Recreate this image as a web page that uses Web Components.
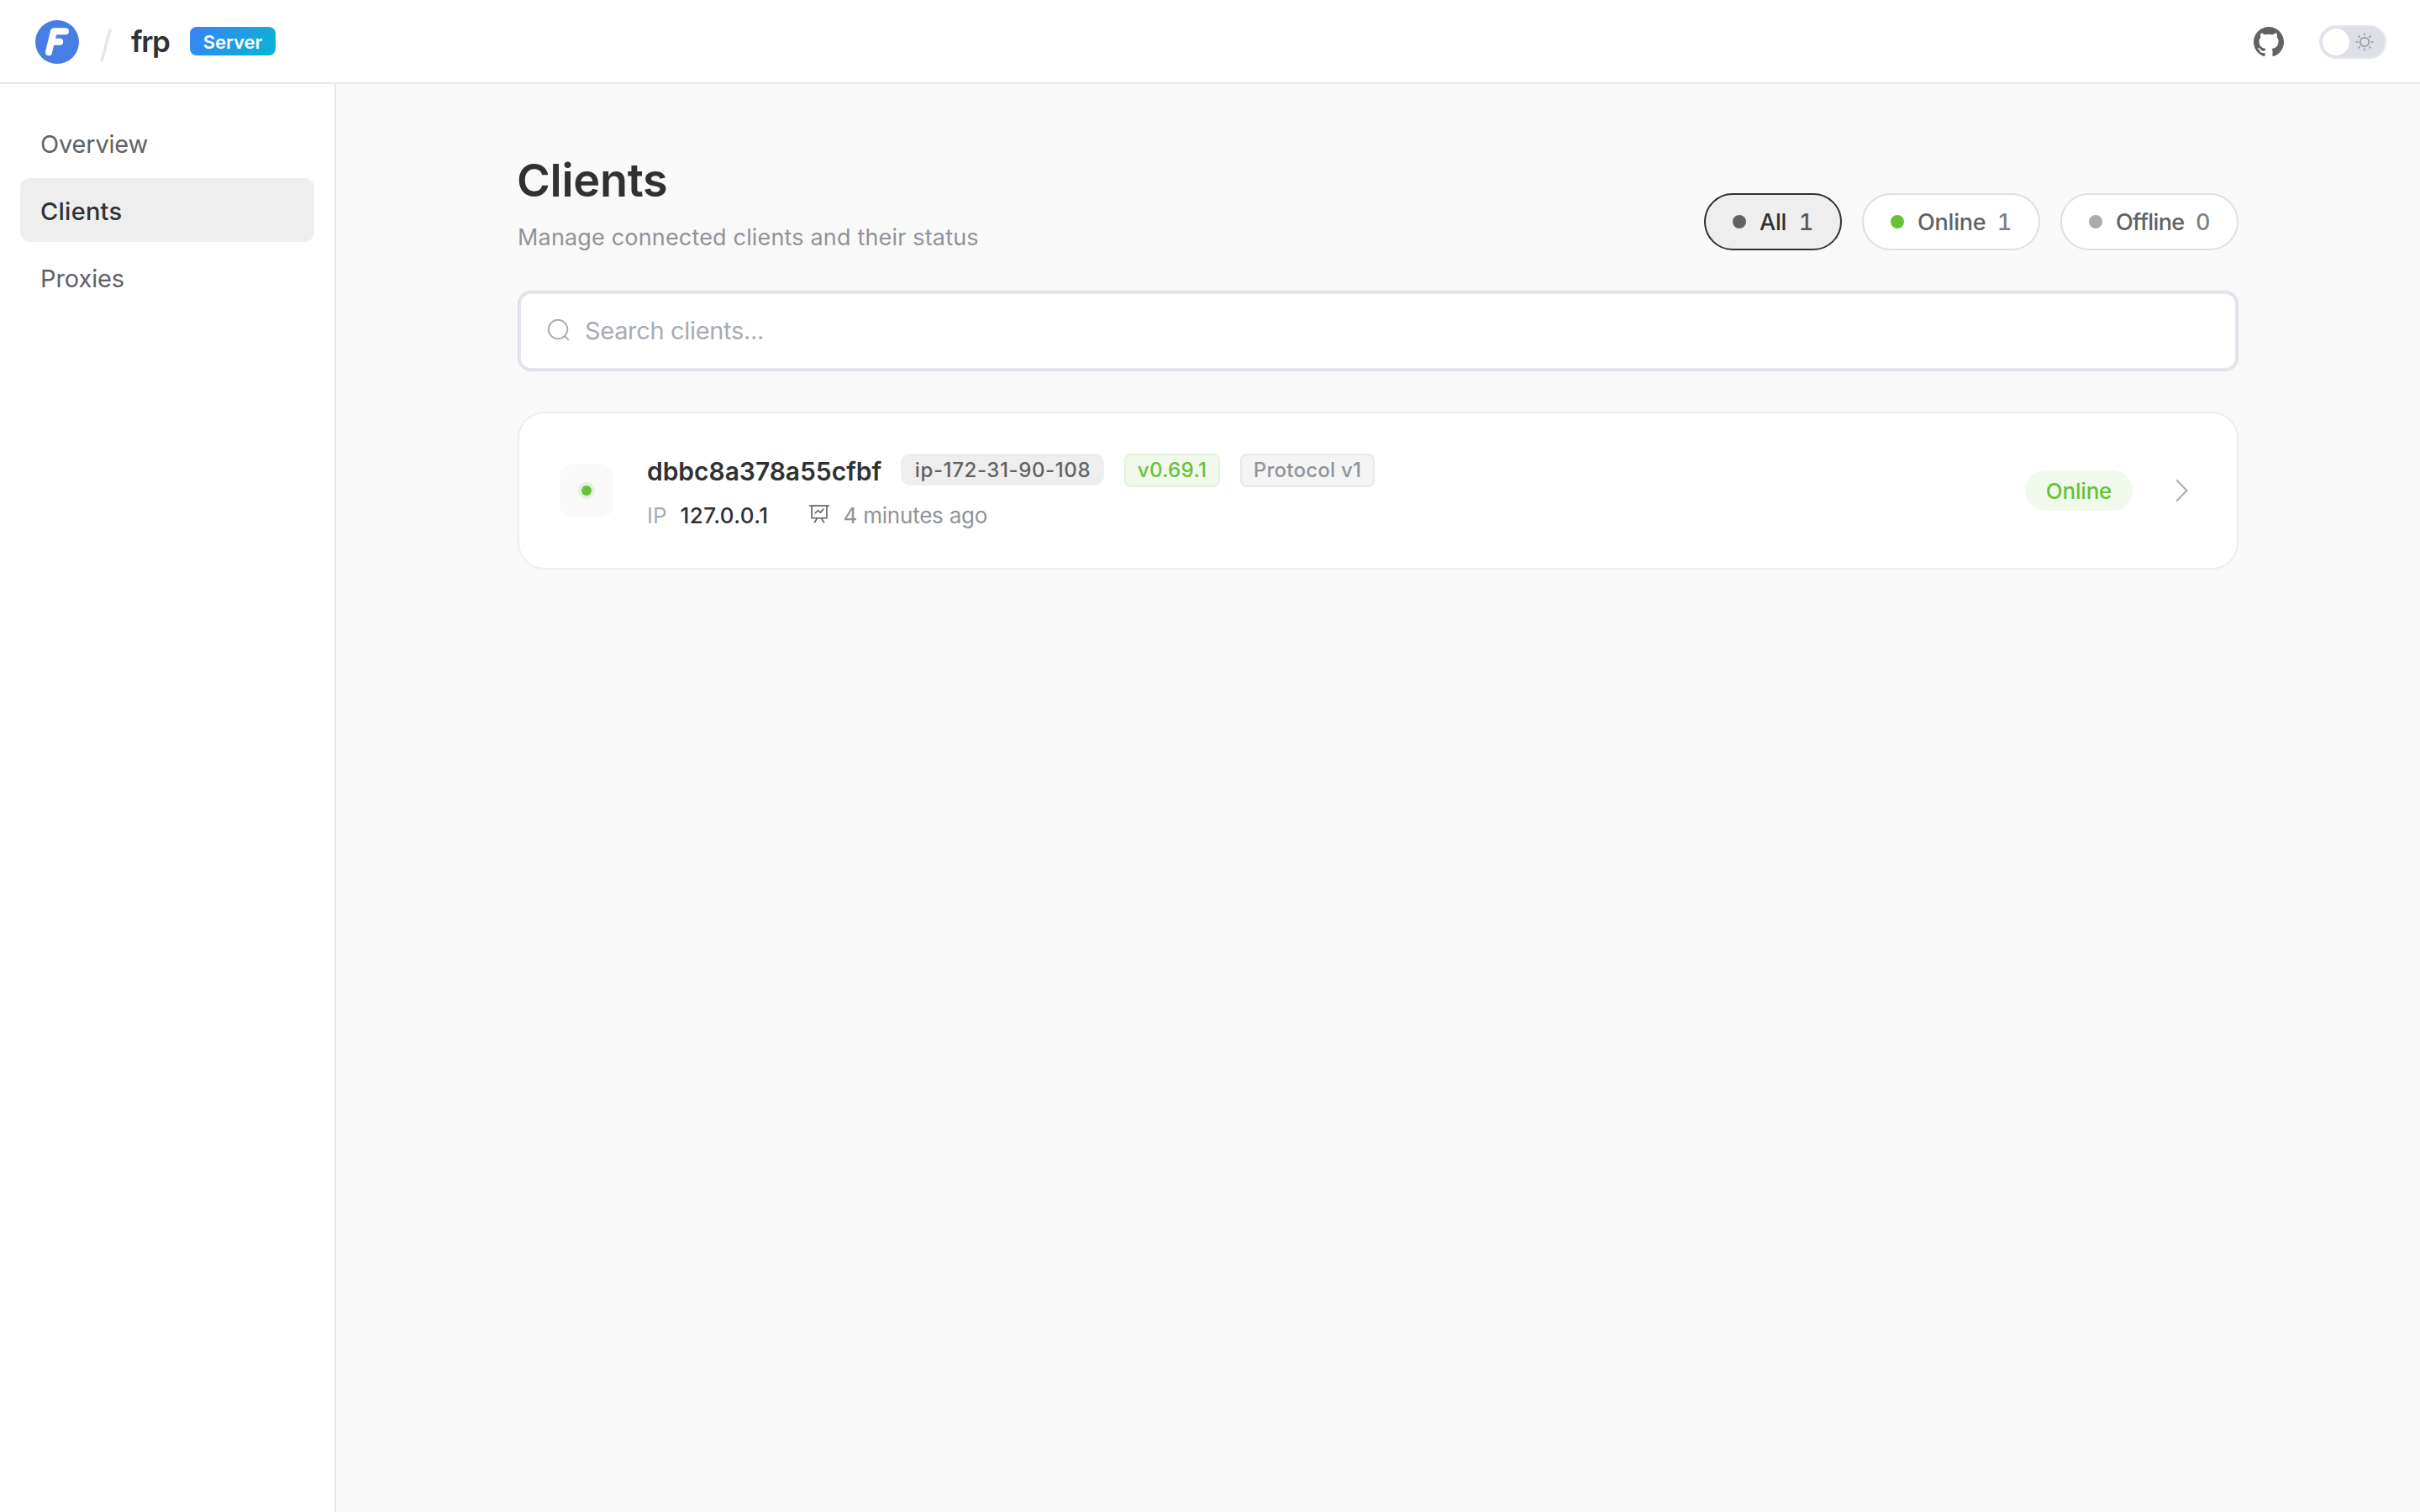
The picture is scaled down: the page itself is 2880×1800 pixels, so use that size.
<!DOCTYPE html>
<html lang="en">
<head>
	<meta charset="utf-8">
	<title>frp server</title>
	<style>
		html, body { height: 100%; }
		body {
			background: #f9f9f9;
			color: #303133;
			font-family: Inter, "Liberation Sans", sans-serif;
			font-size: 28px;
			margin: 0;
			overflow: hidden;
		}
	</style>
</head>
<body>
	<frp-app>
		<frp-header slot="header" name="frp" badge="Server"></frp-header>
		<nav-item slot="nav" style="letter-spacing: -0.2px">Overview</nav-item>
		<nav-item slot="nav" active style="letter-spacing: 0.25px">Clients</nav-item>
		<nav-item slot="nav" style="letter-spacing: -0.1px">Proxies</nav-item>
		<page-head>
			<span slot="title">Clients</span>
			<span slot="subtitle">Manage connected clients and their status</span>
			<filter-pill count="1" active style="--dot: #606266; width: 164px">All</filter-pill>
			<filter-pill count="1" style="--dot: #67c23a; width: 212px">Online</filter-pill>
			<filter-pill count="0" style="--dot: #a8abb2; width: 212px; letter-spacing: -0.6px">Offline</filter-pill>
		</page-head>
		<search-box>Search clients...</search-box>
		<client-card>
			<span slot="name">dbbc8a378a55cfbf</span>
			<client-tag slot="tags" kind="host" style="width: 242px; letter-spacing: 0.6px">ip-172-31-90-108</client-tag>
			<client-tag slot="tags" kind="success" style="width: 114px; letter-spacing: 0.36px">v0.69.1</client-tag>
			<client-tag slot="tags" kind="info" style="width: 160px; letter-spacing: 0.26px">Protocol v1</client-tag>
			<span slot="ip">127.0.0.1</span>
			<span slot="seen">4 minutes ago</span>
			<span slot="status">Online</span>
		</client-card>
	</frp-app>
	<script>
		"use strict";
		(function() {
			const define = (name, html) => {
				window.customElements.define(name, class extends HTMLElement {
					constructor() {
						super();
						const shadow = this.attachShadow({ mode: "open" });
						shadow.innerHTML = typeof html === "function" ? html(this) : html;
					}
				});
			};

			define("frp-app", `
				<style>
					:host {
						display: flex;
						flex-direction: column;
						height: 100vh;
					}
					.body {
						display: flex;
						flex: 1;
						min-height: 0;
					}
					nav {
						background: #fff;
						border-right: 2px solid #e4e7ed;
						box-sizing: border-box;
						display: flex;
						flex-direction: column;
						gap: 4px;
						padding: 32px 24px;
						width: 400px;
					}
					main {
						display: flex;
						flex: 1;
						justify-content: center;
						padding-top: 80px;
					}
					.content {
						display: flex;
						flex-direction: column;
						gap: 48px;
						width: 2048px;
					}
				</style>
				<slot name="header"></slot>
				<div class="body">
					<nav><slot name="nav"></slot></nav>
					<main><div class="content"><slot></slot></div></main>
				</div>
			`);

			define("theme-switch", `
				<style>
					:host {
						align-items: center;
						background: #dcdfe6;
						border: 2px solid #e4e7ed;
						border-radius: 20px;
						box-sizing: border-box;
						display: flex;
						height: 40px;
						justify-content: space-between;
						padding: 0 12px 0 2px;
						width: 80px;
					}
					.knob {
						background: #fff;
						border-radius: 50%;
						height: 32px;
						width: 32px;
					}
					svg {
						fill: none;
						height: 24px;
						stroke: #909399;
						stroke-linecap: round;
						stroke-width: 64;
						width: 24px;
					}
				</style>
				<span class="knob"></span>
				<svg viewBox="0 0 1024 1024">
					<circle cx="512" cy="512" r="224"/>
					<path d="M512 96v64M512 864v64M96 512h64M864 512h64M218 218l45 45M761 761l45 45M218 806l45-45M761 263l45-45"/>
				</svg>
			`);

			define("frp-header", el => `
				<style>
					:host {
						align-items: center;
						background: #fff;
						border-bottom: 2px solid #e4e7ed;
						box-sizing: border-box;
						display: flex;
						height: 100px;
						padding: 0 40px 0 42px;
					}
					.logo { height: 52px; margin-top: 2px; width: 52px; }
					.slash {
						color: #e4e7ed;
						font-size: 44px;
						font-weight: 400;
						line-height: 54px;
						margin: 6px 0 0 24px;
						width: 38px;
					}
					.name {
						font-size: 35px;
						font-weight: 600;
						letter-spacing: -1.4px;
						line-height: 50px;
						width: 70px;
					}
					.badge {
						background: linear-gradient(135deg, #3b82f6, #06b6d4);
						border-radius: 8px;
						box-sizing: border-box;
						color: #fff;
						font-size: 22px;
						font-weight: 600;
						height: 34px;
						line-height: 34px;
						padding-top: 1px;
						text-align: center;
						width: 102px;
					}
					.tools {
						align-items: center;
						display: flex;
						gap: 42px;
						margin: 2px 0 0 auto;
					}
					.github { fill: #606266; height: 36px; width: 36px; }
				</style>
				<svg class="logo" viewBox="0 0 52 52">
					<circle cx="26" cy="26" r="26" fill="#477ee5"/>
					<path d="M36 13.2H22L16 38.3M19.5 25.7H29.2" fill="none" stroke="#fff" stroke-width="8" stroke-linecap="round" stroke-linejoin="round"/>
				</svg>
				<span class="slash">/</span>
				<span class="name">${el.getAttribute("name")}</span>
				<span class="badge">${el.getAttribute("badge")}</span>
				<div class="tools">
					<svg class="github" viewBox="0 0 16 16">
						<path d="M8 0C3.58 0 0 3.58 0 8c0 3.54 2.29 6.53 5.47 7.59.4.07.55-.17.55-.38 0-.19-.01-.82-.01-1.49-2.01.37-2.53-.49-2.69-.94-.09-.23-.48-.94-.82-1.13-.28-.15-.68-.52-.01-.53.63-.01 1.08.58 1.23.82.72 1.21 1.87.87 2.33.66.07-.52.28-.87.51-1.07-1.78-.2-3.64-.89-3.64-3.95 0-.87.31-1.59.82-2.15-.08-.2-.36-1.02.08-2.12 0 0 .67-.21 2.2.82.64-.18 1.32-.27 2-.27s1.36.09 2 .27c1.53-1.04 2.2-.82 2.2-.82.44 1.1.16 1.92.08 2.12.51.56.82 1.27.82 2.15 0 3.07-1.87 3.75-3.65 3.95.29.25.54.73.54 1.48 0 1.07-.01 1.93-.01 2.2 0 .21.15.46.55.38A8.01 8.01 0 0 0 16 8c0-4.42-3.58-8-8-8z"/>
					</svg>
					<theme-switch></theme-switch>
				</div>
			`);

			define("nav-item", `
				<style>
					:host {
						border-radius: 12px;
						box-sizing: border-box;
						color: #606266;
						display: block;
						font-size: 29px;
						height: 76px;
						line-height: 76px;
						padding: 2px 24px 0;
					}
					:host([active]) {
						background: #eee;
						color: #303133;
						font-weight: 500;
					}
				</style>
				<slot></slot>
			`);

			define("page-head", `
				<style>
					:host {
						align-items: flex-end;
						display: flex;
						justify-content: space-between;
					}
					.title {
						font-size: 54px;
						font-weight: 600;
						letter-spacing: -0.27px;
						line-height: 70px;
						margin: 0 0 17px -1px;
					}
					.subtitle {
						color: #909399;
						font-size: 27px;
						height: 31px;
						letter-spacing: 0.17px;
						line-height: 32px;
					}
					.filters { display: flex; gap: 24px; }
				</style>
				<div>
					<h1 class="title"><slot name="title"></slot></h1>
					<div class="subtitle"><slot name="subtitle"></slot></div>
				</div>
				<div class="filters"><slot></slot></div>
			`);

			define("filter-pill", el => `
				<style>
					:host {
						align-items: center;
						background: #fff;
						border: 2px solid #dcdfe6;
						border-radius: 34px;
						box-sizing: border-box;
						color: #606266;
						display: flex;
						font-size: 27px;
						font-weight: 500;
						height: 68px;
						letter-spacing: -0.2px;
						padding: 0 32px;
					}
					:host([active]) {
						background: #eee;
						border-color: #303133;
						color: #303133;
					}
					.dot {
						background: var(--dot);
						border-radius: 50%;
						height: 16px;
						margin-right: 16px;
						width: 16px;
					}
					.count {
						font-variant-numeric: tabular-nums;
						margin-left: auto;
						opacity: 0.8;
					}
				</style>
				<span class="dot"></span>
				<slot></slot>
				<span class="count">${el.getAttribute("count")}</span>
			`);

			define("search-box", `
				<style>
					:host {
						align-items: center;
						background: #fff;
						border: 2px solid #dcdfe6;
						border-radius: 16px;
						box-shadow: inset 0 0 0 2px #e4e7ed;
						box-sizing: border-box;
						color: #a8abb2;
						display: flex;
						font-size: 29px;
						gap: 16px;
						height: 96px;
						letter-spacing: -0.33px;
						padding: 0 32px 2px;
					}
					svg { fill: currentColor; height: 30px; width: 30px; }
				</style>
				<svg viewBox="0 0 1024 1024">
					<path d="m795.904 750.72 124.608 124.608a32 32 0 0 1-45.248 45.248L750.656 795.968a416 416 0 1 1 45.248-45.248zM480 832a352 352 0 1 0 0-704 352 352 0 0 0 0 704z"/>
				</svg>
				<slot></slot>
			`);

			define("client-tag", `
				<style>
					:host {
						border: 2px solid transparent;
						border-radius: 8px;
						box-sizing: border-box;
						display: block;
						font-size: 24px;
						font-weight: 500;
						height: 40px;
						line-height: 35px;
						text-align: center;
					}
					:host([kind="host"]) {
						background: #eee;
						border: 0;
						border-radius: 12px;
						color: #606266;
						height: 38px;
						line-height: 39px;
						padding-left: 1px;
					}
					:host([kind="success"]) {
						background: #f0f9eb;
						border-color: #e1f3d8;
						color: #67c23a;
					}
					:host([kind="info"]) {
						background: #f4f4f5;
						border-color: #e9e9eb;
						color: #909399;
					}
				</style>
				<slot></slot>
			`);

			define("client-card", `
				<style>
					:host {
						align-items: center;
						background: #fff;
						border: 2px solid #ebeef5;
						border-radius: 32px;
						box-sizing: border-box;
						display: flex;
						height: 188px;
						padding: 0 48px;
					}
					.icon {
						align-items: center;
						background: #f9f9f9;
						border-radius: 16px;
						display: flex;
						height: 64px;
						justify-content: center;
						margin-right: 40px;
						width: 64px;
					}
					.icon span {
						background: #67c23a;
						border-radius: 50%;
						box-shadow: 0 0 0 4px #e1f3d8;
						height: 12px;
						width: 12px;
					}
					.info {
						display: flex;
						flex: 1;
						flex-direction: column;
						gap: 16px;
					}
					.row { align-items: flex-start; display: flex; gap: 24px; }
					.name {
						font-size: 30px;
						font-weight: 600;
						letter-spacing: -0.04px;
						line-height: 42px;
						margin-bottom: -2px;
						width: 278px;
					}
					.meta {
						align-items: center;
						color: #909399;
						font-size: 26px;
						gap: 16px;
						line-height: 32px;
					}
					.meta span { padding-top: 2px; margin-bottom: -2px; }
					.label { color: #a8abb2; }
					.ip {
						color: #303133;
						font-weight: 500;
						letter-spacing: 0.4px;
						margin-right: 31px;
					}
					.meta svg { fill: #606266; height: 26px; margin-bottom: 2px; width: 26px; }
					.seen { letter-spacing: -0.22px; }
					.status {
						background: #f0f9eb;
						border-radius: 24px;
						box-sizing: border-box;
						color: #67c23a;
						font-size: 26px;
						font-weight: 500;
						height: 48px;
						letter-spacing: -0.2px;
						line-height: 48px;
						margin-right: 40px;
						padding-top: 1px;
						text-align: center;
						width: 128px;
					}
					.arrow { fill: #a8abb2; height: 36px; width: 36px; }
				</style>
				<div class="icon"><span></span></div>
				<div class="info">
					<div class="row">
						<span class="name"><slot name="name"></slot></span>
						<slot name="tags"></slot>
					</div>
					<div class="row meta">
						<span class="label">IP</span>
						<span class="ip"><slot name="ip"></slot></span>
						<svg viewBox="0 0 1024 1024">
							<path d="M359.168 768H160a32 32 0 0 1-32-32V192H64a32 32 0 0 1 0-64h896a32 32 0 1 1 0 64h-64v544a32 32 0 0 1-32 32H665.216l110.848 192h-73.856L591.36 768H433.024L322.176 960H248.32zM832 192H192v512h640zM342.656 534.656a32 32 0 1 1-45.312-45.312L444.992 341.76l125.44 94.08L679.04 300.032a32 32 0 1 1 49.92 39.936L581.632 524.224 451.008 426.24z"/>
						</svg>
						<span class="seen"><slot name="seen"></slot></span>
					</div>
				</div>
				<span class="status"><slot name="status"></slot></span>
				<svg class="arrow" viewBox="0 0 1024 1024">
					<path d="M340.864 149.312a30.592 30.592 0 0 0 0 42.752L652.736 512 340.864 831.872a30.592 30.592 0 0 0 0 42.752 29.12 29.12 0 0 0 41.728 0L714.24 534.336a32 32 0 0 0 0-44.672L382.592 149.376a29.12 29.12 0 0 0-41.728 0z"/>
				</svg>
			`);
		})();
	</script>
</body>
</html>
